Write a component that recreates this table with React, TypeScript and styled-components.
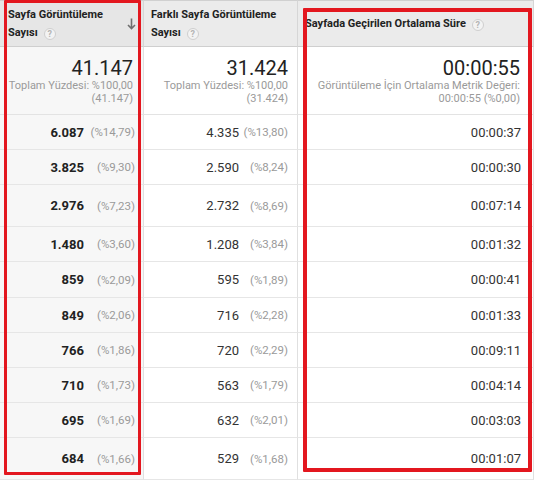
import React from "react";
import styled, { createGlobalStyle } from "styled-components";

const Global = createGlobalStyle`
  html, body { margin: 0; padding: 0; background: #fff; }
  body { font-family: Roboto, "Noto Sans", Arial, sans-serif; color: #222; }
`;

const Wrap = styled.div`
  position: relative;
  width: 534px;
  height: 480px;
  overflow: hidden;
`;

const Table = styled.div`
  display: flex;
  flex-direction: column;
`;

const Row = styled.div<{ $h: number }>`
  display: grid;
  grid-template-columns: 144px 154px 236px;
  height: ${(p) => p.$h}px;
`;

const HeadCell = styled.div<{ $sorted?: boolean; $pl: number }>`
  position: relative;
  display: flex;
  align-items: center;
  padding: 0 4px 0 ${(p) => p.$pl}px;
  background: ${(p) => (p.$sorted ? "#e6e6e6" : "#ebebeb")};
  border-right: 1px solid #d6d6d6;
  border-top: 1px solid #d0d0d0;
  border-bottom: 1px solid #cfcfcf;
  font-size: 11px;
  font-weight: 700;
  line-height: 18px;
  color: #222;
  box-sizing: border-box;
  white-space: nowrap;
`;

const HeadText = styled.div`
  letter-spacing: 0;
`;

const Help = styled.span`
  display: inline-flex;
  align-items: center;
  justify-content: center;
  width: 12px;
  height: 12px;
  margin-left: 6px;
  border-radius: 50%;
  border: 1px solid #cfcfcf;
  background: #f3f3f3;
  color: #b5b5b5;
  font-size: 9px;
  font-weight: 700;
  line-height: 1;
  vertical-align: -1px;
  box-sizing: border-box;
`;

const SortIcon = styled.svg`
  position: absolute;
  right: 7px;
  top: 17px;
`;

const TotalCell = styled.div<{ $sorted?: boolean; $pr: number }>`
  display: flex;
  flex-direction: column;
  align-items: flex-end;
  text-align: right;
  padding: 9px ${(p) => p.$pr}px 0 2px;
  background: ${(p) => (p.$sorted ? "#f7f7f7" : "#fff")};
  border-right: 1px solid #e0e0e0;
  border-bottom: 1px solid #e3e3e3;
  box-sizing: border-box;
  white-space: nowrap;
`;

const BigNum = styled.div`
  font-size: 20px;
  line-height: 24px;
  color: #222;
`;

const SubText = styled.div`
  font-size: 11px;
  line-height: 12.5px;
  color: #9a9a9a;
`;

const DataCell = styled.div<{ $sorted?: boolean; $pr: number }>`
  display: flex;
  align-items: center;
  justify-content: flex-end;
  padding-right: ${(p) => p.$pr}px;
  background: ${(p) => (p.$sorted ? "#f7f7f7" : "#fff")};
  border-right: 1px solid #e0e0e0;
  border-bottom: 1px solid #e6e6e6;
  box-sizing: border-box;
`;

const Num = styled.span<{ $bold?: boolean }>`
  font-size: 13px;
  font-weight: ${(p) => (p.$bold ? 700 : 400)};
  color: ${(p) => (p.$bold ? "#222" : "#333")};
`;

const Pct = styled.span<{ $w: number }>`
  display: inline-block;
  width: ${(p) => p.$w}px;
  text-align: right;
  font-size: 11.5px;
  color: #9a9a9a;
`;

const Highlight = styled.div<{ $l: number; $t: number; $w: number; $h: number; $b: number }>`
  position: absolute;
  left: ${(p) => p.$l}px;
  top: ${(p) => p.$t}px;
  width: ${(p) => p.$w}px;
  height: ${(p) => p.$h}px;
  border: ${(p) => p.$b}px solid #e3171f;
  border-radius: 1px;
  box-sizing: border-box;
  pointer-events: none;
`;

const rows: { a: [string, string]; b: [string, string]; c: string; h: number }[] = [
  { a: ["6.087", "(%14,79)"], b: ["4.335", "(%13,80)"], c: "00:00:37", h: 35 },
  { a: ["3.825", "(%9,30)"], b: ["2.590", "(%8,24)"], c: "00:00:30", h: 35 },
  { a: ["2.976", "(%7,23)"], b: ["2.732", "(%8,69)"], c: "00:07:14", h: 42 },
  { a: ["1.480", "(%3,60)"], b: ["1.208", "(%3,84)"], c: "00:01:32", h: 35 },
  { a: ["859", "(%2,09)"], b: ["595", "(%1,89)"], c: "00:00:41", h: 36 },
  { a: ["849", "(%2,06)"], b: ["716", "(%2,28)"], c: "00:01:33", h: 35 },
  { a: ["766", "(%1,86)"], b: ["720", "(%2,29)"], c: "00:09:11", h: 35 },
  { a: ["710", "(%1,73)"], b: ["563", "(%1,79)"], c: "00:04:14", h: 35 },
  { a: ["695", "(%1,69)"], b: ["632", "(%2,01)"], c: "00:03:03", h: 35 },
  { a: ["684", "(%1,66)"], b: ["529", "(%1,68)"], c: "00:01:07", h: 42 },
];

export default function App() {
  return (
    <>
      <Global />
      <Wrap>
        <Table>
          <Row $h={47}>
            <HeadCell $sorted $pl={8}>
              <HeadText>
                Sayfa Görüntüleme
                <br />
                Sayısı<Help>?</Help>
              </HeadText>
              <SortIcon width="9" height="12" viewBox="0 0 9 12">
                <path d="M4.5 0.5 V10.5 M1 7 L4.5 10.5 L8 7" stroke="#6f6f6f" strokeWidth="1.6" fill="none" />
              </SortIcon>
            </HeadCell>
            <HeadCell $pl={7}>
              <HeadText>
                Farklı Sayfa Görüntüleme
                <br />
                Sayısı<Help>?</Help>
              </HeadText>
            </HeadCell>
            <HeadCell $pl={7}>
              <HeadText>
                Sayfada Geçirilen Ortalama Süre<Help>?</Help>
              </HeadText>
            </HeadCell>
          </Row>
          <Row $h={68}>
            <TotalCell $sorted $pr={10}>
              <BigNum>41.147</BigNum>
              <SubText>Toplam Yüzdesi: %100,00</SubText>
              <SubText>(41.147)</SubText>
            </TotalCell>
            <TotalCell $pr={9}>
              <BigNum>31.424</BigNum>
              <SubText>Toplam Yüzdesi: %100,00</SubText>
              <SubText>(31.424)</SubText>
            </TotalCell>
            <TotalCell $pr={13}>
              <BigNum>00:00:55</BigNum>
              <SubText>Görüntüleme İçin Ortalama Metrik Değeri:</SubText>
              <SubText>00:00:55 (%0,00)</SubText>
            </TotalCell>
          </Row>
          {rows.map((r, i) => (
            <Row $h={r.h} key={i}>
              <DataCell $sorted $pr={8}>
                <Num $bold>{r.a[0]}</Num>
                <Pct $w={51}>{r.a[1]}</Pct>
              </DataCell>
              <DataCell $pr={9}>
                <Num>{r.b[0]}</Num>
                <Pct $w={49}>{r.b[1]}</Pct>
              </DataCell>
              <DataCell $pr={12}>
                <Num>{r.c}</Num>
              </DataCell>
            </Row>
          ))}
        </Table>
        <Highlight $l={4} $t={0} $w={137} $h={475} $b={3} />
        <Highlight $l={303} $t={8} $w={229} $h={464} $b={4} />
      </Wrap>
    </>
  );
}
